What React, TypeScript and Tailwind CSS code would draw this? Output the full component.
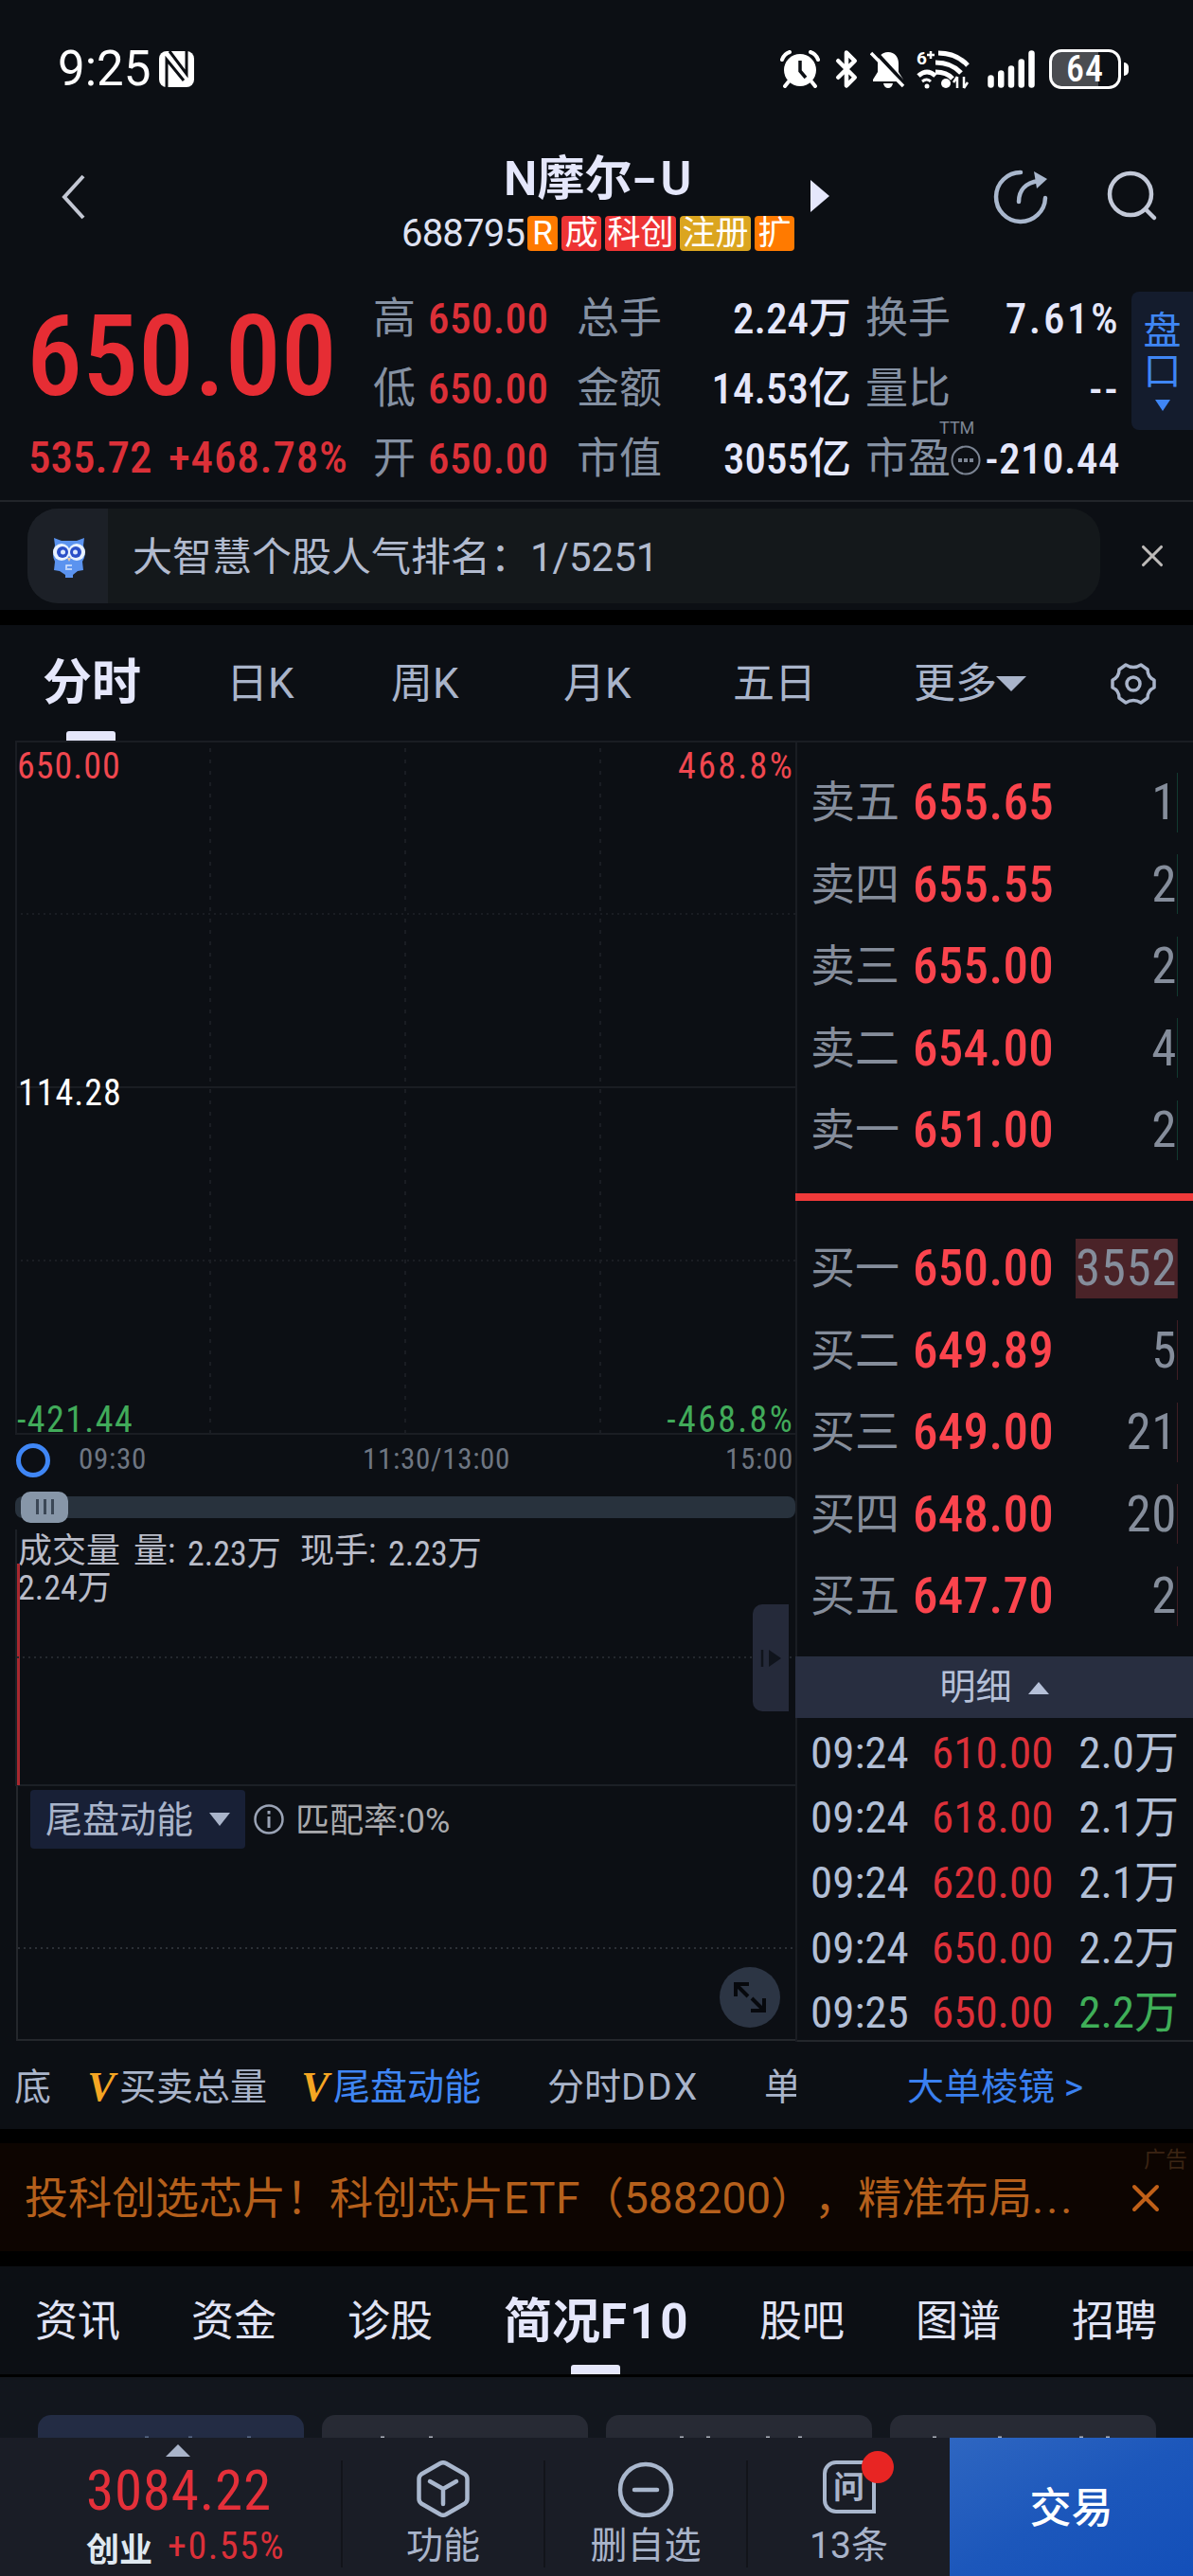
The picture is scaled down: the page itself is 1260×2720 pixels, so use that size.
import { Bluetooth, X } from 'lucide-react';

const quoteRows = [
  { a: '高', price: '650.00', b: '总手', bv: '2.24', unit: '万', c: '换手', cv: '7.61%' },
  { a: '低', price: '650.00', b: '金额', bv: '14.53', unit: '亿', c: '量比', cv: '--' },
  { a: '开', price: '650.00', b: '市值', bv: '3055', unit: '亿', c: '市盈', cv: '-210.44' },
];

const sells = [
  { name: '卖五', price: '655.65', vol: '1' },
  { name: '卖四', price: '655.55', vol: '2' },
  { name: '卖三', price: '655.00', vol: '2' },
  { name: '卖二', price: '654.00', vol: '4' },
  { name: '卖一', price: '651.00', vol: '2' },
];

const buys = [
  { name: '买一', price: '650.00', vol: '3552' },
  { name: '买二', price: '649.89', vol: '5' },
  { name: '买三', price: '649.00', vol: '21' },
  { name: '买四', price: '648.00', vol: '20' },
  { name: '买五', price: '647.70', vol: '2' },
];

const ticks = [
  { time: '09:24', price: '610.00', vol: '2.0', down: false },
  { time: '09:24', price: '618.00', vol: '2.1', down: false },
  { time: '09:24', price: '620.00', vol: '2.1', down: false },
  { time: '09:24', price: '650.00', vol: '2.2', down: false },
  { time: '09:25', price: '650.00', vol: '2.2', down: true },
];

// x positions of the label tops that peek out above the bottom bar
const pills = [
  { active: true, marks: [115, 161, 223] },
  { active: false, marks: [64, 115] },
  { active: false, marks: [80, 108, 171, 205] },
  { active: false, marks: [47, 116, 202, 230] },
];

function StatusBar() {
  return (
    <div className="flex h-[145px] items-center justify-between pl-[61px] pr-[68px] text-white">
      <div className="flex items-center">
        <span className="w-[107px] whitespace-nowrap text-[51px] leading-[60px] font-stretch-[88%]">9:25</span>
        <svg width="37" height="38" viewBox="0 0 37 38">
          <rect width="37" height="38" rx="8" fill="#fff" />
          <path d="M8 38V9l18 22M11 0l18 24V0" stroke="#0c0f14" strokeWidth="3" fill="none" />
        </svg>
      </div>
      <div className="flex items-center">
        <svg width="42" height="40" viewBox="0 0 42 40">
          <circle cx="21" cy="21" r="17" fill="#fff" />
          <path d="M9 33l-4 5M33 33l4 5M2 10q2-6 8-8M40 10q-2-6-8-8" stroke="#fff" strokeWidth="4" fill="none" strokeLinecap="round" />
          <path d="M21 11v11l6 7" stroke="#0c0f14" strokeWidth="3.5" fill="none" />
        </svg>
        <Bluetooth className="ml-[7px]" width={42} height={42} strokeWidth={2.6} />
        <svg className="ml-1" width="38" height="40" viewBox="0 0 38 40">
          <path d="M19 2c7 0 11 5 11 12v9l5 8v2H3v-2l5-8v-9C8 7 12 2 19 2z" fill="#fff" />
          <path d="M14 35h10q-1 5-5 5t-5-5z" fill="#fff" />
          <path d="M4 0l34 37" stroke="#0c0f14" strokeWidth="4" />
          <path d="M1 3l34 35" stroke="#fff" strokeWidth="3.5" />
        </svg>
        <div className="relative ml-[11px] h-[42px] w-[56px]">
          <span className="absolute left-0 top-0 text-[19px] font-bold leading-[20px]">6</span>
          <svg width="56" height="42" viewBox="0 0 56 42">
            <path d="M11 6h8M15 2v8" stroke="#fff" strokeWidth="2.500" />
            <path d="M23 4q19 0 31 13M20 14q17 0 27 11M20 24q12 0 18 7M2 28q9-8 18 0" stroke="#fff" strokeWidth="5" fill="none" />
            <path d="M6 34q5-4 9 0" stroke="#fff" strokeWidth="3" fill="none" />
            <circle cx="11" cy="39" r="2.500" fill="#fff" />
            <circle cx="31" cy="36" r="5" fill="#fff" />
            <path d="M43 29v12m0-12l-4 6M50 41V29m0 12l4-6" stroke="#fff" strokeWidth="2.500" fill="none" />
          </svg>
        </div>
        <svg className="ml-[19px]" width="50" height="40" viewBox="0 0 50 40">
          <path d="M3.500 29.500v7M14.250 24.500v12M25 19.500v17M35.750 12.500v24M46.500 3.500v33" stroke="#fff" strokeWidth="6.500" strokeLinecap="round" />
        </svg>
        <div className="ml-[15px] flex h-[42px] w-[76px] items-center justify-center rounded-[13px] border-[3px] border-white bg-[linear-gradient(90deg,#4a4c50_70%,#0c0f14_70%)] text-[38px] font-medium leading-[36px] tracking-[1px] font-stretch-[75%]">
          64
        </div>
        <div className="ml-[3px] h-[14px] w-[5px] rounded-r-full bg-white" />
      </div>
    </div>
  );
}

function Header() {
  return (
    <div className="flex h-[145px] pl-[62px] pr-[34px]">
      <svg className="mt-[38px]" width="32" height="50" viewBox="0 0 32 50">
        <path d="M26 3L6 25l20 22" stroke="#c3c7d3" strokeWidth="4" fill="none" />
      </svg>
      <div className="ml-[330px] flex flex-col">
        <div className="mt-[9px] flex h-[70px] items-center pl-[108px]">
          <span className="w-[324px] whitespace-nowrap text-[50px] font-semibold leading-[60px] text-[#e5e7fb]">
            N摩尔<span className="inline-block w-[30px] origin-left scale-x-[1.5]">-</span>U
          </span>
          <svg className="mt-[36px]" width="20" height="34" viewBox="0 0 20 34">
            <path d="M0 0l20 17L0 34z" fill="#e5e7fb" />
          </svg>
        </div>
        <div className="mt-[4px] flex h-[37px] items-center gap-[4px] text-[35px] leading-[37px] text-white">
          <span className="-mr-[3px] w-[132px] whitespace-nowrap text-[40px] tracking-[-0.8px] text-[#dfe2f2] font-stretch-[92%]">688795</span>
          <span className="h-[37px] w-[32px] rounded-[4px] bg-[#ff7a00] text-center">R</span>
          <span className="h-[37px] w-[42px] rounded-[4px] bg-[#ee3434] text-center">成</span>
          <span className="h-[37px] w-[75px] rounded-[4px] bg-[#ee3434] text-center">科创</span>
          <span className="h-[37px] w-[75px] rounded-[4px] bg-[#dba51f] text-center">注册</span>
          <span className="h-[37px] w-[42px] rounded-[4px] bg-[#ff7a00] text-center">扩</span>
        </div>
      </div>
      <div className="ml-auto flex gap-[59px]">
        <svg className="mt-[32px]" width="62" height="62" viewBox="0 0 62 62" fill="none" stroke="#a9b7cd" strokeWidth="4.500">
          <path d="M31 5A26 26 0 1 0 57 32" strokeLinecap="round" />
          <path d="M29 36C29 24 36 16 50 14" strokeLinecap="round" />
          <path d="M45 4l14 8-11 10z" fill="#a9b7cd" stroke="none" />
        </svg>
        <svg className="mt-[35px]" width="58" height="58" viewBox="0 0 58 58" fill="none" stroke="#c3c9d8" strokeWidth="4.500">
          <circle cx="26" cy="25" r="22" />
          <path d="M42 41l9 9" strokeLinecap="round" />
        </svg>
      </div>
    </div>
  );
}

function Quote() {
  return (
    <div className="flex h-[240px] border-b-2 border-[#22252a] pt-[10px]">
      <div className="w-[394px] pl-[28px] font-medium text-[#e62d34] font-stretch-[75%]">
        <div className="mt-[17px] h-[120px] whitespace-nowrap text-[118px] leading-[120px]">650.00</div>
        <div className="mt-[21px] flex h-[50px] items-center whitespace-nowrap pl-[2px] text-[47px] leading-[50px] text-[#db3038]">
          <span className="w-[148px]">535.72</span>
          <span className="tracking-[0.8px]">+468.78%</span>
        </div>
      </div>
      <div className="w-[801px]">
        {quoteRows.map((row, i) => (
          <div key={row.a} className="flex h-[74px] items-center whitespace-nowrap text-[45px] leading-[50px] text-[#8591a3]">
            <span className="w-[58px]">{row.a}</span>
            <span className="w-[157px] font-medium tracking-[0.4px] text-[#db3038] font-stretch-[75%]">{row.price}</span>
            <span className="w-[105px]">{row.b}</span>
            <span className="w-[185px] text-right font-medium text-[#e5e7fb] font-stretch-[75%]">
              {row.bv}
              {row.unit}
            </span>
            <span className="relative ml-[15px] w-[115px]">
              {row.c}
              {i === 2 && <span className="absolute left-[78px] -top-[17px] text-[18px] leading-[18px] text-[#7c8594]">TTM</span>}
              {i === 2 && (
                <svg className="absolute left-[89px] top-[9px]" width="34" height="34" viewBox="0 0 34 34">
                  <circle cx="17" cy="17" r="14.500" stroke="#7c8594" strokeWidth="2" fill="none" />
                  <path d="M9 15h4v4H9zM15 15h4v4h-4zM21 15h4v4h-4z" fill="#7c8594" />
                </svg>
              )}
            </span>
            <span className={`${i === 2 ? 'tracking-[0.5px]' : 'tracking-[2.5px]'} w-[154px] text-right font-medium text-[#e5e7fb] font-stretch-[75%]`}>
              {row.cv}
            </span>
          </div>
        ))}
      </div>
      <div className="mt-[8px] flex h-[146px] w-[65px] flex-col items-center rounded-l-[8px] bg-[#141c2d] pt-[20px] text-[40px] leading-[43px] text-[#3f86f5]">
        <span>盘</span>
        <span>口</span>
        <svg className="mt-[8px]" width="16" height="12" viewBox="0 0 16 12">
          <path d="M0 0h16L8 12z" fill="#3f86f5" />
        </svg>
      </div>
    </div>
  );
}

function Owl() {
  return (
    <svg width="40" height="44" viewBox="0 0 40 44">
      <path d="M4 2l8 3h16l8-3-1 8q4 10-1 17l1 9-6 1-5 4v3h-8v-3l-6-4-6-1 1-9Q1 20 5 10z" fill="#5b93ef" />
      <circle cx="12" cy="17" r="9" fill="#e9f2ff" />
      <circle cx="28" cy="17" r="9" fill="#e9f2ff" />
      <circle cx="13" cy="17" r="6" fill="#2b50c8" />
      <circle cx="27" cy="17" r="6" fill="#2b50c8" />
      <circle cx="13.500" cy="17" r="2.500" fill="#dce9ff" />
      <circle cx="26.500" cy="17" r="2.500" fill="#dce9ff" />
      <path d="M18 23h4l-2 4z" fill="#f0c9a0" />
      <path d="M17 36v-5h6M18 35h5" stroke="#dce9ff" strokeWidth="1.500" fill="none" />
    </svg>
  );
}

function RankBanner() {
  return (
    <div className="flex h-[114px] items-start pl-[29px] pt-[7px]">
      <div className="flex h-[100px] w-[1133px] items-center overflow-hidden rounded-[32px] bg-[#14181b]">
        <div className="flex h-full w-[85px] items-center justify-center bg-[#1c2027] pl-[3px] pt-[2px]">
          <Owl />
        </div>
        <span className="ml-[26px] mt-[3px] whitespace-nowrap text-[42px] leading-[50px] text-[#b2bbcf]">
          大智慧个股人气排名：<span className="font-stretch-[92%]">1/5251</span>
        </span>
      </div>
      <X className="ml-[36px] mt-[31px]" width={38} height={38} strokeWidth={2} color="#bdbab8" />
    </div>
  );
}

function ChartTabs() {
  return (
    <div className="relative flex h-[122px] items-center whitespace-nowrap pt-[2px] text-[44px] leading-[60px] text-[#a9b4ca]">
      <span className="ml-[45px] w-[194px] text-[52px] font-bold text-[#e5e7fb]">分时</span>
      <span className="w-[174px]">日K</span>
      <span className="w-[182px]">周K</span>
      <span className="w-[179px]">月K</span>
      <span className="w-[191px]">五日</span>
      <span>更多</span>
      <svg className="-ml-[1px]" width="32" height="16" viewBox="0 0 32 16">
        <path d="M0 0h32L16 16z" fill="#a9b4ca" />
      </svg>
      <svg className="ml-[88px]" width="50" height="50" viewBox="0 0 50 50" fill="none" stroke="#a9b4ca" strokeWidth="3.500" strokeLinejoin="round">
        <path d="M17 5q8 5 16 0l7 5q0 8 7 11v8q-7 3-7 11l-7 5q-8-5-16 0l-7-5q0-8-7-11v-8q7-3 7-11z" />
        <circle cx="25" cy="25" r="7" />
      </svg>
      <div className="absolute bottom-0 left-[70px] h-[10px] w-[52px] rounded-t-[3px] bg-[#e5e7fb]" />
    </div>
  );
}

function PriceChart() {
  return (
    <div className="relative ml-[16px] h-[733px] text-[38px] leading-[40px] tracking-[1px] font-stretch-[75%]">
      <svg width="824" height="733" viewBox="0 0 824 733" fill="none" stroke="#1a1d23" strokeWidth="2">
        <path d="M1 0v733M0 1h824M0 366h824M0 732h824" />
        <path d="M0 183h824M0 549h824" strokeDasharray="2 4" />
        <path d="M206 8v725M412 8v725M618 8v725" strokeDasharray="4 8" />
      </svg>
      <span className="absolute left-[2px] top-[7px] text-[#f0474f]">650.00</span>
      <span className="absolute right-[1px] top-[7px] tracking-[2.3px] text-[#f0474f]">468.8%</span>
      <span className="absolute left-[3px] top-[352px] text-white">114.28</span>
      <span className="absolute bottom-[-4px] left-[2px] tracking-[1.4px] text-[#41ab5a]">-421.44</span>
      <span className="absolute bottom-[-4px] right-[1px] tracking-[2.3px] text-[#41ab5a]">-468.8%</span>
    </div>
  );
}

function TimeAxis() {
  return (
    <div>
      <div className="flex h-[52px] items-center pl-[17px] pr-[2px] pt-[1px] text-[31px] tracking-[0.7px] text-[#6e7682] font-stretch-[75%]">
        <div className="h-[36px] w-[36px] rounded-full border-[5px] border-[#3f86f5]" />
        <span className="ml-[30px] w-[300px]">09:30</span>
        <span className="flex-1">11:30/13:00</span>
        <span>15:00</span>
      </div>
      <div className="ml-[16px] flex h-[48px] items-center">
        <div className="flex h-[23px] w-[824px] items-center rounded-[8px] bg-[#28323d] pl-[6px]">
          <div className="flex h-[33px] w-[50px] items-center justify-center gap-[5px] rounded-[10px] bg-[#8796a8]">
            <div className="h-[16px] w-[3px] bg-[#3b4756]" />
            <div className="h-[16px] w-[3px] bg-[#3b4756]" />
            <div className="h-[16px] w-[3px] bg-[#3b4756]" />
          </div>
        </div>
      </div>
    </div>
  );
}

function VolumeChart() {
  return (
    <div className="relative ml-[16px] h-[271px] border-b-2 border-l-2 border-[#1c2026] pl-[1px] pt-[3px] text-[36px] leading-[38px] text-[#b9bcc8]">
      <div className="flex h-[40px] items-center whitespace-nowrap">
        <span className="w-[122px]">成交量</span>
        <span className="w-[57px]">量:</span>
        <span className="mt-[6px] w-[119px] font-stretch-[75%]">2.23万</span>
        <span className="w-[93px]">现手:</span>
        <span className="mt-[6px] font-stretch-[75%]">2.23万</span>
      </div>
      <div className="font-stretch-[75%]">2.24万</div>
      <div className="absolute left-0 top-[36px] h-[234px] w-[3px] bg-[#a8282f]" />
      <svg className="absolute left-0 top-[134px]" width="822" height="2">
        <path d="M0 1h822" stroke="#24282e" strokeWidth="2" strokeDasharray="2 4" />
      </svg>
      <div className="absolute right-[7px] top-[79px] flex h-[113px] w-[38px] items-center justify-center rounded-l-[10px] bg-[#252a3a]">
        <svg width="24" height="20" viewBox="0 0 24 20">
          <path d="M3 1v18" stroke="#10141c" strokeWidth="2.500" />
          <path d="M10 1l13 9-13 9z" fill="#10141c" />
        </svg>
      </div>
    </div>
  );
}

function IndicatorPanel() {
  return (
    <div className="relative ml-[17px] h-[269px] border-b-2 border-l-2 border-[#24272c]">
      <div className="flex items-center pl-[13px] pt-[4px]">
        <div className="flex h-[62px] w-[227px] items-center rounded-[4px] bg-[#182036] pl-[16px] pt-[3px] text-[39px] text-[#a9b4ca]">
          尾盘动能
          <svg className="-mt-[3px] ml-[17px]" width="22" height="14" viewBox="0 0 22 14">
            <path d="M0 0h22L11 14z" fill="#a9b4ca" />
          </svg>
        </div>
        <svg className="ml-[8px]" width="34" height="34" viewBox="0 0 34 34">
          <circle cx="17" cy="17" r="14.500" stroke="#9aa3b5" strokeWidth="2.500" fill="none" />
          <path d="M17 14v12M17 8v3.500" stroke="#9aa3b5" strokeWidth="3" />
        </svg>
        <span className="ml-[11px] mt-[3px] text-[36px] leading-[40px] text-[#a9aaad]">匹配率:0%</span>
      </div>
      <svg className="absolute left-0 top-[170px]" width="821" height="2">
        <path d="M0 1h821" stroke="#2c3036" strokeWidth="2" strokeDasharray="2 4" />
      </svg>
      <div className="absolute right-[16px] top-[191px] flex h-[64px] w-[64px] items-center justify-center rounded-full bg-[#2c3544]">
        <svg width="36" height="36" viewBox="0 0 36 36" fill="none" stroke="#07090d" strokeWidth="4">
          <path d="M3 17V4h14M3 4l13 13M33 19v13H19M33 32L20 19" />
        </svg>
      </div>
    </div>
  );
}

function BookRow({ row, side }: { row: { name: string; price: string; vol: string }; side: 'buy' | 'sell' }) {
  const big = row.vol.length > 2;
  return (
    <div className="flex h-[86.5px] items-center whitespace-nowrap pl-[14px] text-[47px] leading-[60px] text-[#858d9b]">
      <span className="w-[108px]">{row.name}</span>
      <span className="w-[160px] text-[53px] font-medium tracking-[0.3px] text-[#fb444d] font-stretch-[75%]">{row.price}</span>
      <span
        className={`${big ? 'bg-[#4a2328]' : ''} ${
          side === 'sell' ? 'border-[#123a30]' : 'border-[#3f1e24]'
        } ml-[12px] flex h-[63px] w-[108px] items-center justify-end border-r text-[53px] tracking-[0.6px] font-stretch-[75%]`}
      >
        {row.vol}
      </span>
    </div>
  );
}

function OrderBook() {
  return (
    <div className="h-[1374px] w-[420px] border-l-2 border-t-2 border-[#1a1d23]">
      <div className="h-[476px] pt-[20px]">
        {sells.map((row) => (
          <BookRow key={row.name} row={row} side="sell" />
        ))}
      </div>
      <div className="-ml-[2px] h-[8px] bg-[#f03a3a]" />
      <div className="h-[481px] pt-[28px]">
        {buys.map((row) => (
          <BookRow key={row.name} row={row} side="buy" />
        ))}
      </div>
      <div className="-ml-[2px] flex h-[65px] items-center justify-center bg-[#282e40] text-[38px] text-[#b5c0d8]">
        明细
        <svg className="ml-[17px] mt-[2px]" width="22" height="13" viewBox="0 0 22 13">
          <path d="M0 13h22L11 0z" fill="#b5c0d8" />
        </svg>
      </div>
      <div className="h-[342px] border-b-2 border-[#24272c] pt-[1px]">
        {ticks.map((t, i) => (
          <div key={i} className="flex h-[68.600px] items-center whitespace-nowrap pl-[14px] pt-[3px] text-[47px] leading-[60px] text-[#b2bfd6] font-stretch-[75%]">
            <span className="w-[128px]">{t.time}</span>
            <span className="w-[136px] text-[#dc3039]">{t.price}</span>
            <span className={`${t.down ? 'text-[#3fae58]' : ''} w-[125px] text-right`}>{t.vol}万</span>
          </div>
        ))}
      </div>
    </div>
  );
}

function VipMark() {
  return <span className="mr-[2px] w-[34px] shrink-0 text-center font-['Liberation_Serif'] text-[44px] font-bold italic text-[#f5a623]">V</span>;
}

function IndicatorBar() {
  return (
    <div className="flex h-[92px] items-center whitespace-nowrap pt-[4px] text-[39px] leading-[50px] text-[#a9b4ca]">
      <div className="flex w-[841px] items-center overflow-hidden pl-[15px]">
        <span className="w-[75px] shrink-0">底</span>
        <VipMark />
        <span className="w-[190px] shrink-0">买卖总量</span>
        <VipMark />
        <span className="w-[226px] shrink-0 text-[#3f86f5]">尾盘动能</span>
        <span className="w-[229px] shrink-0">
          分时<span className="tracking-[2.5px]">DDX</span>
        </span>
        <span className="shrink-0">单</span>
      </div>
      <span className="ml-[117px] text-[#3a80f0]">大单棱镜 &gt;</span>
    </div>
  );
}

function AdStrip() {
  return (
    <div className="relative flex h-[114px] items-center bg-[#0d0501] pl-[26px] pt-[2px] text-[46px] leading-[60px] text-[#b5601c]">
      <span className="w-[1160px] whitespace-nowrap [text-spacing-trim:space-all]">
        投科创选芯片！科创芯片<span className="tracking-[0.5px]">ETF</span>（588200），精准布局<span className="tracking-[3px]">...</span>
      </span>
      <X width={48} height={48} strokeWidth={2} color="#c06018" />
      <span className="absolute right-[6px] top-[5px] text-[23px] leading-[26px] text-[#3b2413]">广告</span>
    </div>
  );
}

function InfoTabs() {
  return (
    <div className="relative flex h-[114px] items-center whitespace-nowrap pl-[37px] pt-[4px] text-[45px] leading-[60px] text-[#e0e3f4]">
      <span className="w-[165px]">资讯</span>
      <span className="w-[165px]">资金</span>
      <span className="w-[165px]">诊股</span>
      <span className="w-[270px] text-[51px] font-bold text-[#e5e7fb]">
        简况<span className="tracking-[3px]">F10</span>
      </span>
      <span className="w-[165px]">股吧</span>
      <span className="w-[165px]">图谱</span>
      <span>招聘</span>
      <div className="absolute bottom-0 left-[603px] h-[10px] w-[52px] rounded-t-[3px] bg-[#e5e7fb]" />
    </div>
  );
}

function SubTabs() {
  return (
    <div className="mt-[3px] flex h-[64px] gap-[19px] overflow-hidden bg-[#12161d] pl-[40px] pt-[40px]">
      {pills.map((pill, i) => (
        <div key={i} className={`${pill.active ? 'bg-[#232c44]' : 'bg-[#272a34]'} h-[60px] w-[281px] shrink-0 rounded-[14px]`}>
          <svg width="281" height="24" viewBox="0 0 281 24" fill={pill.active ? '#5c6c8c' : '#b0b4be'}>
            {pill.marks.map((x) => (
              <rect key={x} x={x - 2} y="22.500" width="4" height="1.500" />
            ))}
          </svg>
        </div>
      ))}
    </div>
  );
}

function BottomBar() {
  return (
    <div className="flex h-[146px] bg-[#1a1d26] text-[#a9b4ca]">
      <div className="flex h-full w-[360px] flex-col items-start pl-[91px]">
        <svg className="ml-[84px] mt-[7px]" width="26" height="13" viewBox="0 0 26 13">
          <path d="M0 13h26L13 0z" fill="#a9b4ca" />
        </svg>
        <span className="mt-[6px] text-[59px] leading-[60px] tracking-[0.8px] text-[#e4303a] font-stretch-[75%]">3084.22</span>
        <span className="mt-[5px] flex items-center whitespace-nowrap text-[35px] leading-[44px]">
          <span className="mt-[7px] w-[86px] font-bold text-[#dfe8f0]">创业</span>
          <span className="-mt-[4px] text-[40px] tracking-[1.5px] text-[#dc3039] font-stretch-[75%]">+0.55%</span>
        </span>
      </div>
      <div className="mt-[24px] flex h-[113px] w-[214px] flex-col items-center border-l-2 border-[#12141a] text-[39px] leading-[46px]">
        <svg width="56" height="60" viewBox="0 0 56 60" fill="none" stroke="#a9b7cd" strokeWidth="4.500" strokeLinejoin="round" strokeLinecap="round">
          <path d="M25 3q3-1.500 6 0l20 11.500q2.500 2 2.500 5v21q0 3-2.500 5L31 57q-3 1.500-6 0L5 45.500q-2.500-2-2.500-5v-21q0-3 2.500-5z" />
          <path d="M14 22l14 8 14-8M28 30v16" />
        </svg>
        <span className="mt-[7px]">功能</span>
      </div>
      <div className="mt-[24px] flex h-[113px] w-[214px] flex-col items-center border-l-2 border-[#12141a] text-[39px] leading-[46px]">
        <svg width="60" height="60" viewBox="0 0 60 60" fill="none" stroke="#a9b7cd" strokeWidth="4.500">
          <circle cx="30" cy="31" r="27" />
          <path d="M18 31h24" strokeLinecap="round" />
        </svg>
        <span className="mt-[7px] whitespace-nowrap">删自选</span>
      </div>
      <div className="mt-[24px] flex h-[113px] w-[215px] flex-col items-center border-l-2 border-[#12141a] text-[39px] leading-[46px]">
        <div className="relative flex h-[60px] items-start">
          <div className="flex h-[56px] w-[56px] items-center justify-center rounded-[14px] rounded-br-none border-[4px] border-[#a9b7cd] text-[33px] font-bold leading-none">
            问
          </div>
          <div className="absolute -right-[19px] -top-[10px] h-[34px] w-[34px] rounded-full bg-[#e82523]" />
        </div>
        <span className="mt-[7px] font-stretch-[92%]">13条</span>
      </div>
      <div className="flex flex-1 items-center justify-center bg-linear-to-br from-[#2e66c1] via-[#1c57bb] to-[#134fb9] pt-[3px] text-[44px] font-medium text-white">
        交易
      </div>
    </div>
  );
}

export default function App() {
  return (
    <div className="flex h-[2720px] w-[1260px] flex-col overflow-hidden bg-black font-['Roboto','Noto_Sans_CJK_SC',sans-serif]">
      <div className="h-[644px] bg-[#0c0f14]">
        <StatusBar />
        <Header />
        <Quote />
        <RankBanner />
      </div>
      <div className="mt-[16px] h-[1588px] bg-[#0c0f14]">
        <ChartTabs />
        <div className="flex h-[1374px]">
          <div className="w-[840px]">
            <PriceChart />
            <TimeAxis />
            <VolumeChart />
            <IndicatorPanel />
          </div>
          <OrderBook />
        </div>
        <IndicatorBar />
      </div>
      <div className="mt-[15px]">
        <AdStrip />
      </div>
      <div className="mt-[16px] bg-[#0c0f14]">
        <InfoTabs />
      </div>
      <SubTabs />
      <BottomBar />
    </div>
  );
}
